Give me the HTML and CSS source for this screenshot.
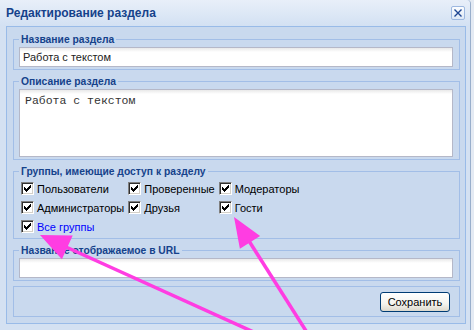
FILE: index.html
```html
<!DOCTYPE html>
<html lang="ru">
<head>
<meta charset="utf-8">
<title>Редактирование раздела</title>
<link rel="stylesheet" href="styles.css">
</head>
<body>
<div class="window">
  <div class="header">
    <span class="title">Редактирование раздела</span>
    <span class="close">
      <svg width="8" height="8" viewBox="0 0 8 8"><path d="M0.5 0.5 L7.5 7.5 M7.5 0.5 L0.5 7.5" stroke="#1d4592" stroke-width="1.4" fill="none"/></svg>
    </span>
  </div>
  <div class="frame">
    <div class="panel">
      <fieldset class="fs">
        <legend>Название раздела</legend>
        <input class="field" type="text" value="Работа с текстом">
      </fieldset>
      <fieldset class="fs">
        <legend>Описание раздела</legend>
        <textarea class="area">Работа с текстом</textarea>
      </fieldset>
      <fieldset class="fs">
        <legend>Группы, имеющие доступ к разделу</legend>
        <div class="groups">
          <label class="cb"><span class="box"><svg width="7" height="7" viewBox="0 0 7 7"><path d="M0 2 L2 4 L6 0 L7 0 L7 2 L2 7 L0 5 Z" fill="#000" shape-rendering="crispEdges"/></svg></span><span>Пользователи</span></label>
          <label class="cb"><span class="box"><svg width="7" height="7" viewBox="0 0 7 7"><path d="M0 2 L2 4 L6 0 L7 0 L7 2 L2 7 L0 5 Z" fill="#000" shape-rendering="crispEdges"/></svg></span><span>Проверенные</span></label>
          <label class="cb"><span class="box"><svg width="7" height="7" viewBox="0 0 7 7"><path d="M0 2 L2 4 L6 0 L7 0 L7 2 L2 7 L0 5 Z" fill="#000" shape-rendering="crispEdges"/></svg></span><span>Модераторы</span></label>
          <label class="cb"><span class="box"><svg width="7" height="7" viewBox="0 0 7 7"><path d="M0 2 L2 4 L6 0 L7 0 L7 2 L2 7 L0 5 Z" fill="#000" shape-rendering="crispEdges"/></svg></span><span>Администраторы</span></label>
          <label class="cb"><span class="box"><svg width="7" height="7" viewBox="0 0 7 7"><path d="M0 2 L2 4 L6 0 L7 0 L7 2 L2 7 L0 5 Z" fill="#000" shape-rendering="crispEdges"/></svg></span><span>Друзья</span></label>
          <label class="cb"><span class="box"><svg width="7" height="7" viewBox="0 0 7 7"><path d="M0 2 L2 4 L6 0 L7 0 L7 2 L2 7 L0 5 Z" fill="#000" shape-rendering="crispEdges"/></svg></span><span>Гости</span></label>
          <label class="cb"><span class="box"><svg width="7" height="7" viewBox="0 0 7 7"><path d="M0 2 L2 4 L6 0 L7 0 L7 2 L2 7 L0 5 Z" fill="#000" shape-rendering="crispEdges"/></svg></span><span class="link">Все группы</span></label>
        </div>
      </fieldset>
      <fieldset class="fs">
        <legend>Название отображаемое в URL</legend>
        <input class="field" type="text" value="">
      </fieldset>
      <fieldset class="fs fs-buttons">
        <button class="btn" type="button">Сохранить</button>
      </fieldset>
    </div>
  </div>
</div>
<svg class="arrows" width="474" height="330" viewBox="0 0 474 330">
  <defs>
    <filter id="soft" x="-10%" y="-10%" width="120%" height="120%">
      <feGaussianBlur stdDeviation="0.6"/>
    </filter>
  </defs>
  <g filter="url(#soft)" fill="#ff3ce2" stroke="#ff3ce2">
    <line x1="66" y1="247" x2="258" y2="334" stroke-width="3.5"/>
    <polygon points="40,235 61.9,259.2 72.7,235.6" stroke="none"/>
    <line x1="249" y1="241" x2="308" y2="334" stroke-width="3.5"/>
    <polygon points="234,217 239.9,248.8 260.1,236" stroke="none"/>
  </g>
</svg>
</body>
</html>
```

FILE: styles.css
```css
html, body {
  margin: 0;
  padding: 0;
}

body {
  width: 474px;
  height: 330px;
  overflow: hidden;
  position: relative;
  background: #e4eaf3;
  font-family: "Liberation Sans", Arial, sans-serif;
  font-size: 11px;
  color: #000;
}

.window {
  width: 471px;
  height: 330px;
  box-sizing: border-box;
  border-right: 1px solid #98aecb;
  border-top-right-radius: 4px;
  background: #d4e1f2;
  display: flex;
  flex-direction: column;
}

.header {
  height: 26px;
  flex: none;
  display: flex;
  align-items: center;
  justify-content: space-between;
  padding: 0 5px 0 6px;
  background: linear-gradient(#e8eff9, #d3e1f3);
  border-top-right-radius: 4px;
}

.title {
  font-weight: bold;
  font-size: 12px;
  color: #15428b;
  padding-bottom: 1px;
}

.close {
  width: 14px;
  height: 14px;
  box-sizing: border-box;
  border: 1px solid #9db8e0;
  border-radius: 2px;
  background: linear-gradient(#fbfdff, #dde8f6);
  display: flex;
  align-items: center;
  justify-content: center;
  margin-top: -1px;
}

.close svg {
  display: block;
}

.frame {
  padding: 0 4px 0 6px;
}

.panel {
  border: 1px solid #99bbe8;
  background: #c9d9ee;
  padding: 6px 5px 6px 6px;
}

.fs {
  margin: 0 0 5px 0;
  border: 1px solid #a2bee7;
  padding: 1px 6px 2px 5px;
  min-width: 0;
}

.fs legend {
  padding: 0 2px;
  font-weight: bold;
  font-size: 10.3px;
  line-height: 13px;
  color: #15428b;
}

.fs-buttons {
  margin-bottom: 0;
  padding: 5px 9px 4px 5px;
  display: flex;
  justify-content: flex-end;
}

.field {
  display: block;
  box-sizing: border-box;
  width: 100%;
  height: 20px;
  margin: 0;
  padding: 1px 3px;
  border: 1px solid #b5b8c8;
  background: linear-gradient(#e9e9e9, #ffffff 4px, #ffffff);
  font-family: "Liberation Sans", Arial, sans-serif;
  font-size: 11px;
  color: #222;
  outline: none;
}

.area {
  display: block;
  box-sizing: border-box;
  width: 100%;
  height: 68px;
  margin: 0;
  padding: 4px 5px;
  border: 1px solid #b5b8c8;
  background: linear-gradient(#e9e9e9, #ffffff 4px, #ffffff);
  font-family: "Liberation Mono", "Courier New", monospace;
  font-size: 11.5px;
  line-height: 14px;
  color: #333;
  resize: none;
  outline: none;
}

.groups {
  display: grid;
  grid-template-columns: repeat(3, max-content);
  grid-auto-rows: 19px;
  column-gap: 4px;
  padding-left: 2px;
}

.cb {
  display: flex;
  align-items: center;
  gap: 3px;
  white-space: nowrap;
}

.box {
  width: 13px;
  height: 13px;
  box-sizing: border-box;
  flex: none;
  background: #fff;
  border-top: 1px solid #808080;
  border-left: 1px solid #808080;
  border-right: 1px solid #fff;
  border-bottom: 1px solid #fff;
  box-shadow: inset 1px 1px 0 #303030, inset -1px -1px 0 #d4d0c8;
  display: flex;
  align-items: center;
  justify-content: center;
}

.box svg {
  display: block;
}

.link {
  color: #0000ff;
}

.btn {
  width: 70px;
  height: 20px;
  box-sizing: border-box;
  margin: 0;
  padding: 0 0 1px;
  border: 1px solid #003c74;
  border-radius: 3px;
  background: linear-gradient(#ffffff, #f4f3ee 60%, #dcd8cc);
  font-family: "Liberation Sans", Arial, sans-serif;
  font-size: 11px;
  color: #000;
}

.arrows {
  position: absolute;
  left: 0;
  top: 0;
  pointer-events: none;
}
```
